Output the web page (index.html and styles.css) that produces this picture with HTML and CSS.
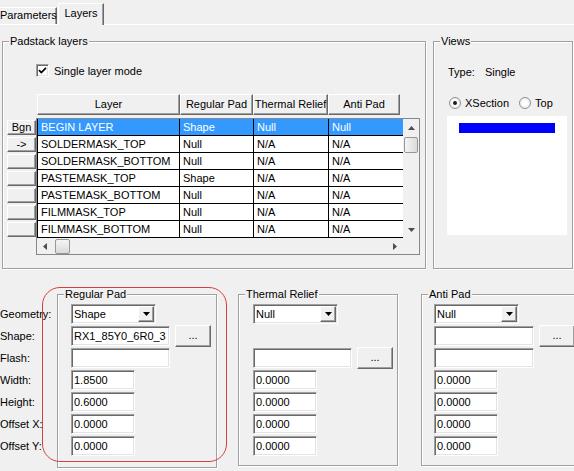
FILE: index.html
```html
<!DOCTYPE html>
<html>
<head>
<meta charset="utf-8">
<title>Padstack Layers</title>
<link rel="stylesheet" href="styles.css">
</head>
<body>
<div class="tabs">
  <div class="tab first">Parameters</div>
  <div class="tab active">Layers</div>
</div>
<div class="page">
  <div class="top">
    <div class="group pad-layers">
      <div class="legend">Padstack layers</div>
      <div class="check-row">
        <span class="checkbox"><svg width="9" height="9" viewBox="0 0 9 9"><path d="M1 4.2 L3.3 6.6 L8 1.8" fill="none" stroke="#000" stroke-width="1.7"/></svg></span>
        <span class="check-label">Single layer mode</span>
      </div>
      <div class="table-wrap">
        <div class="rowbtns">
          <div class="rbtn">Bgn</div>
          <div class="rbtn">-&gt;</div>
          <div class="rbtn"></div>
          <div class="rbtn"></div>
          <div class="rbtn"></div>
          <div class="rbtn"></div>
          <div class="rbtn"></div>
        </div>
        <div class="tablecol">
          <div class="thead">
            <div class="th h1">Layer</div>
            <div class="th h2">Regular Pad</div>
            <div class="th h3">Thermal Relief</div>
            <div class="th h4">Anti Pad</div>
          </div>
          <div class="grid">
            <div class="gbody">
              <div class="rows">
                <div class="row sel"><div class="td c1">BEGIN LAYER</div><div class="td c2">Shape</div><div class="td c3">Null</div><div class="td c4">Null</div></div>
                <div class="row"><div class="td c1">SOLDERMASK_TOP</div><div class="td c2">Null</div><div class="td c3">N/A</div><div class="td c4">N/A</div></div>
                <div class="row"><div class="td c1">SOLDERMASK_BOTTOM</div><div class="td c2">Null</div><div class="td c3">N/A</div><div class="td c4">N/A</div></div>
                <div class="row"><div class="td c1">PASTEMASK_TOP</div><div class="td c2">Shape</div><div class="td c3">N/A</div><div class="td c4">N/A</div></div>
                <div class="row"><div class="td c1">PASTEMASK_BOTTOM</div><div class="td c2">Null</div><div class="td c3">N/A</div><div class="td c4">N/A</div></div>
                <div class="row"><div class="td c1">FILMMASK_TOP</div><div class="td c2">Null</div><div class="td c3">N/A</div><div class="td c4">N/A</div></div>
                <div class="row"><div class="td c1">FILMMASK_BOTTOM</div><div class="td c2">Null</div><div class="td c3">N/A</div><div class="td c4">N/A</div></div>
              </div>
              <div class="vscroll">
                <div class="sarrow"><svg width="7" height="4" viewBox="0 0 7 4"><path d="M0 4 L3.5 0 L7 4 Z" fill="#4d4d4d"/></svg></div>
                <div class="vthumb"></div>
                <div class="vspace"></div>
                <div class="sarrow"><svg width="7" height="4" viewBox="0 0 7 4"><path d="M0 0 L3.5 4 L7 0 Z" fill="#4d4d4d"/></svg></div>
              </div>
            </div>
            <div class="hrow">
              <div class="hscroll">
                <div class="sarrow"><svg width="4" height="7" viewBox="0 0 4 7"><path d="M4 0 L0 3.5 L4 7 Z" fill="#4d4d4d"/></svg></div>
                <div class="hthumb"></div>
                <div class="hspace"></div>
                <div class="sarrow"><svg width="4" height="7" viewBox="0 0 4 7"><path d="M0 0 L4 3.5 L0 7 Z" fill="#4d4d4d"/></svg></div>
              </div>
              <div class="corner"></div>
            </div>
          </div>
        </div>
      </div>
    </div>
    <div class="group views">
      <div class="legend">Views</div>
      <div class="type-row"><span class="type-key">Type:</span><span>Single</span></div>
      <div class="radio-row">
        <span class="radio on"></span><span class="radio-label">XSection</span>
        <span class="radio second"></span><span class="radio-label">Top</span>
      </div>
      <div class="preview"><div class="bar"></div></div>
    </div>
  </div>
  <div class="bottom">
    <div class="labels">
      <div class="lbl">Geometry:</div>
      <div class="lbl">Shape:</div>
      <div class="lbl">Flash:</div>
      <div class="lbl">Width:</div>
      <div class="lbl">Height:</div>
      <div class="lbl">Offset X:</div>
      <div class="lbl">Offset Y:</div>
    </div>
    <div class="group pad reg">
      <div class="legend">Regular Pad</div>
      <div class="frows">
        <div class="frow"><div class="combo"><span class="combo-text">Shape</span><span class="dd"><svg width="7" height="4" viewBox="0 0 7 4"><path d="M0 0 L3.5 4 L7 0 Z" fill="#000"/></svg></span></div></div>
        <div class="frow"><div class="tb wide">RX1_85Y0_6R0_3</div><div class="btn">...</div></div>
        <div class="frow"><div class="tb wide"></div></div>
        <div class="frow"><div class="tb num">1.8500</div></div>
        <div class="frow"><div class="tb num">0.6000</div></div>
        <div class="frow"><div class="tb num">0.0000</div></div>
        <div class="frow"><div class="tb num">0.0000</div></div>
      </div>
    </div>
    <div class="group pad therm">
      <div class="legend">Thermal Relief</div>
      <div class="frows">
        <div class="frow"><div class="combo"><span class="combo-text">Null</span><span class="dd"><svg width="7" height="4" viewBox="0 0 7 4"><path d="M0 0 L3.5 4 L7 0 Z" fill="#000"/></svg></span></div></div>
        <div class="frow"></div>
        <div class="frow"><div class="tb wide"></div><div class="btn">...</div></div>
        <div class="frow"><div class="tb num">0.0000</div></div>
        <div class="frow"><div class="tb num">0.0000</div></div>
        <div class="frow"><div class="tb num">0.0000</div></div>
        <div class="frow"><div class="tb num">0.0000</div></div>
      </div>
    </div>
    <div class="group pad anti">
      <div class="legend">Anti Pad</div>
      <div class="frows">
        <div class="frow"><div class="combo"><span class="combo-text">Null</span><span class="dd"><svg width="7" height="4" viewBox="0 0 7 4"><path d="M0 0 L3.5 4 L7 0 Z" fill="#000"/></svg></span></div></div>
        <div class="frow"><div class="tb wide"></div><div class="btn">...</div></div>
        <div class="frow"><div class="tb wide"></div></div>
        <div class="frow"><div class="tb num">0.0000</div></div>
        <div class="frow"><div class="tb num">0.0000</div></div>
        <div class="frow"><div class="tb num">0.0000</div></div>
        <div class="frow"><div class="tb num">0.0000</div></div>
      </div>
    </div>
  </div>
</div>
<div class="annot"></div>
</body>
</html>
```
FILE: styles.css
```css
* { box-sizing: border-box; }
html, body { margin: 0; padding: 0; }
body {
  width: 574px;
  height: 471px;
  overflow: hidden;
  position: relative;
  background: #f0f0f0;
  font-family: "Liberation Sans", Arial, sans-serif;
  font-size: 11px;
  color: #000;
}

/* Tabs */
.tabs {
  height: 24px;
  display: flex;
  align-items: flex-end;
  position: relative;
  z-index: 2;
}
.tab {
  background: #f0f0f0;
  border-top: 1px solid #fff;
  border-left: 1px solid #fff;
  border-right: 1px solid #696969;
  box-shadow: inset -1px 0 0 #a0a0a0;
  white-space: nowrap;
  flex: none;
}
.tab.first {
  margin-left: -3px;
  width: 60px;
  height: 17px;
  line-height: 15px;
  padding-left: 2px;
}
.tab.active {
  margin-left: 1px;
  width: 46px;
  height: 22px;
  line-height: 19px;
  text-align: center;
  margin-bottom: -1px;
}
.page {
  border-top: 1px solid #fff;
}

/* Group boxes */
.group {
  border: 1px solid #a0a0a0;
  box-shadow: inset 1px 1px 0 #fff, 1px 1px 0 #fff;
  flex: none;
}
.legend {
  width: fit-content;
  height: 13px;
  line-height: 13px;
  margin: -7px 0 0 6px;
  padding: 0 1px;
  background: #f0f0f0;
  white-space: nowrap;
}

.top {
  display: flex;
  margin-top: 16px;
}
.pad-layers {
  margin-left: 2px;
  width: 424px;
  height: 228px;
}
.views {
  margin-left: 7px;
  width: 140px;
  height: 228px;
}

/* Checkbox */
.check-row {
  display: flex;
  align-items: center;
  margin: 16px 0 0 33px;
  height: 13px;
}
.checkbox {
  width: 13px;
  height: 13px;
  background: #fff;
  border: 1px solid;
  border-color: #a0a0a0 #fff #fff #a0a0a0;
  box-shadow: inset 1px 1px 0 #696969, inset -1px -1px 0 #e3e3e3;
  display: flex;
  align-items: center;
  justify-content: center;
}
.check-label { margin-left: 5px; }

/* Table */
.table-wrap {
  display: flex;
  margin-top: 17px;
}
.rowbtns {
  margin: 26px 0 0 4px;
  width: 29px;
  display: flex;
  flex-direction: column;
  gap: 2px;
  flex: none;
}
.rbtn, .th, .btn {
  background: #f0f0f0;
  border: 1px solid;
  border-color: #fff #696969 #696969 #fff;
  box-shadow: inset -1px -1px 0 #a0a0a0;
  text-align: center;
}
.rbtn {
  height: 15px;
  line-height: 13px;
}
.tablecol { width: 384px; flex: none; }
.thead {
  display: flex;
  margin-left: 1px;
  height: 21px;
}
.th { height: 21px; line-height: 19px; white-space: nowrap; flex: none; }
.h1 { width: 143px; }
.h2 { width: 73px; }
.h3 { width: 75px; }
.h4 { width: 72px; }

.grid {
  margin-top: 3px;
  width: 384px;
  height: 137px;
  border: 1px solid #828790;
  background: #fff;
}
.gbody { display: flex; height: 119px; }
.rows { width: 366px; flex: none; }
.row { display: flex; height: 17px; }
.td {
  height: 17px;
  line-height: 16px;
  padding-left: 3px;
  border-bottom: 1px solid #000;
  white-space: nowrap;
  overflow: hidden;
  flex: none;
}
.c1 { width: 143px; border-left: 1px solid #000; border-right: 1px solid #000; }
.c2 { width: 74px; border-right: 1px solid #000; }
.c3 { width: 75px; border-right: 1px solid #000; }
.c4 { width: 74px; }
.row.sel .td { background: #3399ff; color: #fff; }

.vscroll {
  width: 16px;
  display: flex;
  flex-direction: column;
  background: #f0f0f0;
  flex: none;
}
.sarrow {
  width: 16px;
  height: 17px;
  display: flex;
  align-items: center;
  justify-content: center;
  flex: none;
}
.vthumb, .hthumb {
  border: 1px solid #979797;
  border-radius: 2px;
  background: linear-gradient(to right, #f5f5f5, #dadada);
  flex: none;
}
.vthumb { margin: 1px 1px 0 1px; height: 16px; }
.vspace { flex: 1; }
.hrow { display: flex; height: 16px; }
.hscroll {
  width: 366px;
  display: flex;
  align-items: center;
  background: #f0f0f0;
  flex: none;
}
.hscroll .sarrow { height: 16px; }
.hthumb { width: 15px; height: 15px; margin-left: 2px; background: linear-gradient(#f5f5f5, #dadada); }
.hspace { flex: 1; }
.corner { width: 16px; background: #f0f0f0; flex: none; }

/* Views */
.type-row { margin: 18px 0 0 14px; height: 13px; line-height: 13px; }
.type-key { margin-right: 10px; }
.radio-row {
  display: flex;
  align-items: center;
  margin: 17px 0 0 15px;
  height: 13px;
}
.radio {
  width: 12px;
  height: 12px;
  border-radius: 50%;
  border: 1px solid #8e8f8f;
  background: radial-gradient(circle at 50% 50%, #fff 30%, #e1e1e1 100%);
  position: relative;
  flex: none;
}
.radio.on::after {
  content: "";
  position: absolute;
  left: 3px;
  top: 3px;
  width: 4px;
  height: 4px;
  border-radius: 50%;
  background: #1b1b1b;
}
.radio.second { margin-left: 10px; }
.radio-label { margin-left: 4px; }
.preview {
  margin: 7px 0 0 13px;
  width: 120px;
  height: 119px;
  background: #fff;
  padding: 7px 0 0 12px;
}
.bar { width: 96px; height: 10px; background: #0000ff; }

/* Bottom */
.bottom {
  display: flex;
  align-items: flex-start;
  margin-top: 25px;
}
.labels {
  width: 57px;
  margin-top: 9px;
  flex: none;
}
.lbl { height: 22px; line-height: 22px; white-space: nowrap; }
.pad { height: 172px; }
.reg { width: 160px; height: 174px; }
.therm { width: 160px; margin-left: 21px; }
.anti { width: 170px; margin-left: 23px; }
.frows { padding-top: 2px; }
.reg .frows { padding-left: 13px; }
.therm .frows { padding-left: 14px; }
.anti .frows { padding-left: 12px; }
.frow { height: 22px; display: flex; align-items: center; }
.tb, .combo {
  height: 20px;
  background: #fff;
  border: 1px solid;
  border-color: #a0a0a0 #fff #fff #a0a0a0;
  box-shadow: inset 1px 1px 0 #696969, inset -1px -1px 0 #e3e3e3;
  line-height: 18px;
  padding-left: 2px;
  white-space: nowrap;
  overflow: hidden;
  flex: none;
}
.wide { width: 99px; }
.anti .wide { width: 100px; }
.num { width: 64px; }
.btn {
  width: 36px;
  height: 22px;
  line-height: 18px;
  margin-left: 5px;
  flex: none;
}
.combo {
  width: 85px;
  display: flex;
  align-items: center;
  padding: 1px 1px 1px 2px;
}
.combo-text { flex: 1; line-height: 16px; }
.dd {
  width: 16px;
  height: 16px;
  background: #f0f0f0;
  border: 1px solid;
  border-color: #fff #696969 #696969 #fff;
  box-shadow: inset -1px -1px 0 #a0a0a0;
  display: flex;
  align-items: center;
  justify-content: center;
  flex: none;
}

/* Annotation ring drawn over the Regular Pad section */
.annot {
  position: absolute;
  left: 42px;
  top: 287px;
  width: 185px;
  height: 175px;
  border: 1px solid #d4403e;
  border-radius: 18px;
  pointer-events: none;
}
```
